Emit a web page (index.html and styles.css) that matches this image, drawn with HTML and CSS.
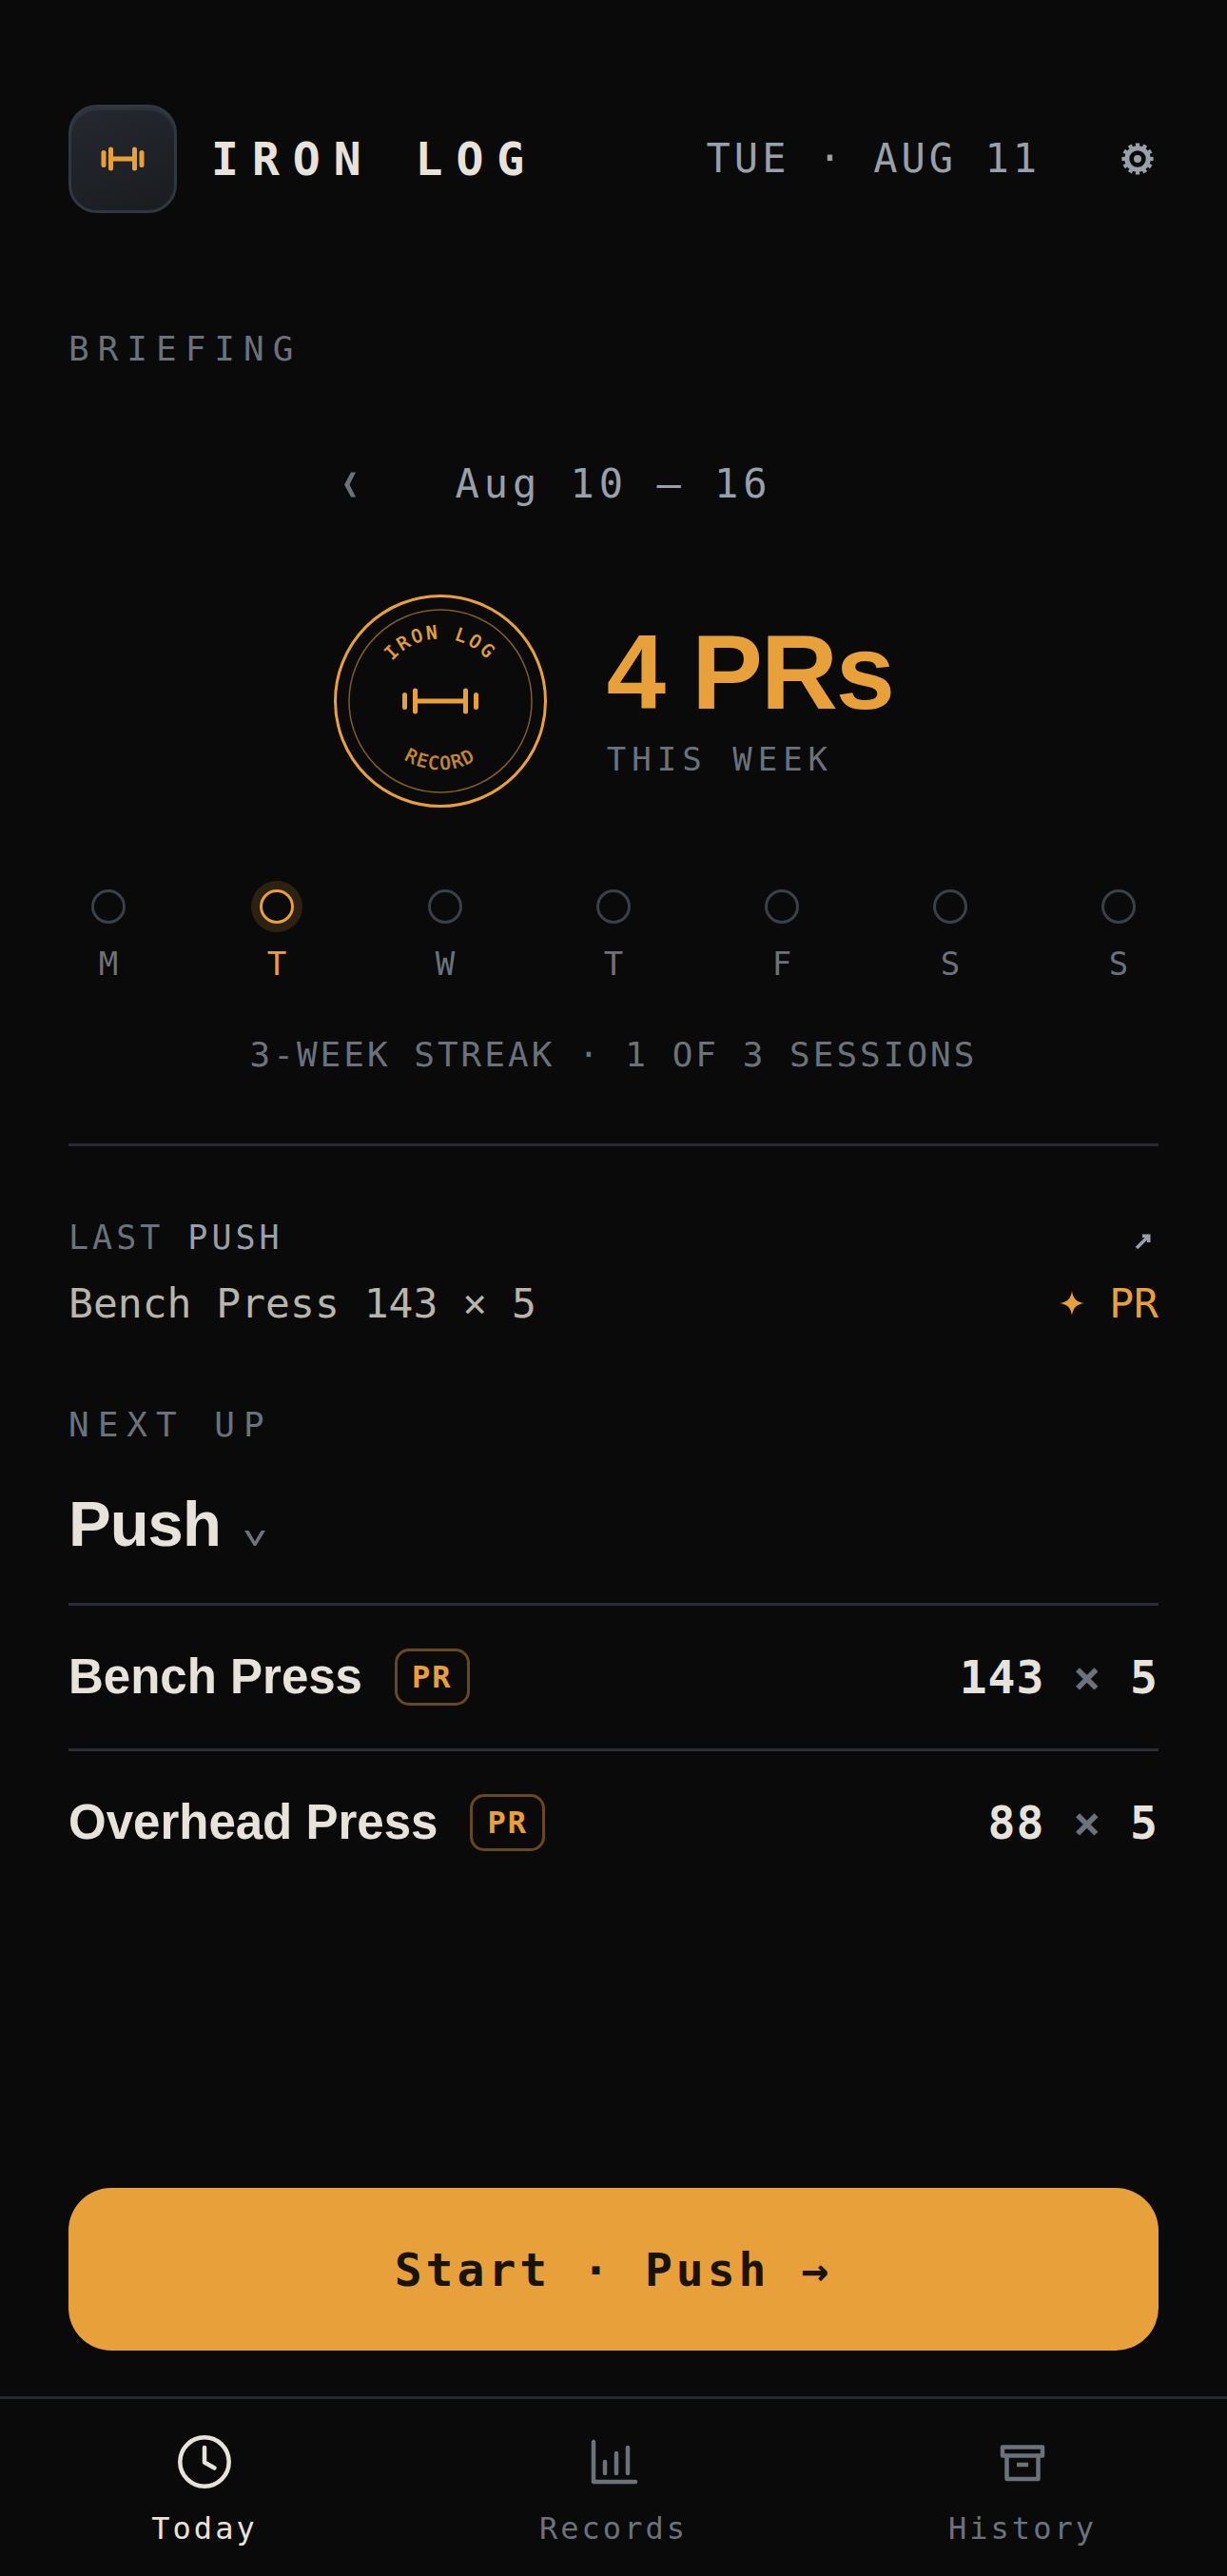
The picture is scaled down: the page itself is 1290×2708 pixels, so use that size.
FILE: index.html
```html
<!DOCTYPE html>
<html lang="en">
<head>
<meta charset="utf-8">
<meta name="viewport" content="width=device-width, initial-scale=1">
<title>Iron Log</title>
<link rel="stylesheet" href="styles.css">
</head>
<body>

<main class="screen">
  <header class="header">
    <div class="logo">
      <svg width="48" height="32" viewBox="0 0 48 32" fill="none" stroke="currentColor" stroke-width="5" stroke-linecap="round">
        <path d="M4 9.5v13M11.5 6v20M36.5 6v20M44 9.5v13"/>
        <path d="M11.5 16h25"/>
      </svg>
    </div>
    <h1 class="brand">IRON LOG</h1>
    <span class="date">TUE · AUG 11</span>
    <button class="icon-btn" type="button" aria-label="Settings">
      <svg width="36" height="36" viewBox="0 0 36 36" fill="none" stroke="currentColor">
        <circle cx="18" cy="18" r="11.2" stroke-width="5"/>
        <circle cx="18" cy="18" r="14.6" stroke-width="4" pathLength="24" stroke-dasharray="1.1 0.9" stroke-dashoffset="0.55"/>
        <circle cx="18" cy="18" r="4" fill="currentColor" stroke="none"/>
      </svg>
    </button>
  </header>

  <section class="briefing">
    <h2 class="label">BRIEFING</h2>

    <div class="week">
      <button class="week-btn" type="button" aria-label="Previous week">
        <svg width="14" height="28" viewBox="0 0 14 28" fill="currentColor">
          <path d="M8 1.500h5L6.500 14.500 13 27.500H8L1 14.500z"/>
        </svg>
      </button>
      <span class="week-range">Aug 10 – 16</span>
    </div>

    <div class="summary">
      <svg class="seal" width="224" height="224" viewBox="0 0 224 224" fill="none" stroke="currentColor">
        <defs>
          <path id="arc-top" d="M46 112a66 66 0 0 1 132 0"/>
          <path id="arc-bottom" d="M40 112a72 72 0 0 0 144 0"/>
        </defs>
        <circle cx="112" cy="112" r="110.5" stroke-width="3"/>
        <circle cx="112" cy="112" r="96" stroke-width="1.5" opacity="0.55"/>
        <text class="seal-top"><textPath href="#arc-top" startOffset="50%">IRON LOG</textPath></text>
        <text class="seal-bottom"><textPath href="#arc-bottom" startOffset="50%">RECORD</textPath></text>
        <path d="M74.500 105.500v13M85.500 101v22M138.500 101v22M149.500 105.500v13M85.500 112h53" stroke-width="5" stroke-linecap="round"/>
      </svg>
      <div class="summary-text">
        <strong class="count">4 PRs</strong>
        <span class="count-label">THIS WEEK</span>
      </div>
    </div>

    <ol class="days">
      <li class="day"><span class="dot"></span>M</li>
      <li class="day today"><span class="dot"></span>T</li>
      <li class="day"><span class="dot"></span>W</li>
      <li class="day"><span class="dot"></span>T</li>
      <li class="day"><span class="dot"></span>F</li>
      <li class="day"><span class="dot"></span>S</li>
      <li class="day"><span class="dot"></span>S</li>
    </ol>

    <p class="streak">3-WEEK STREAK · 1 OF 3 SESSIONS</p>
  </section>

  <section class="last">
    <div class="last-row last-head">
      <h2 class="last-title">LAST <span class="last-name">PUSH</span></h2>
      <button class="icon-btn" type="button" aria-label="Open last session">
        <svg width="18" height="18" viewBox="0 0 18 18" fill="none" stroke="currentColor" stroke-width="3.600">
          <path d="M2 16 14 4"/>
          <path d="M8 3.300h6.700V10"/>
        </svg>
      </button>
    </div>
    <div class="last-row last-set">
      <span>Bench Press 143 × 5</span>
      <span class="record">
        <svg width="26" height="26" viewBox="0 0 26 26" fill="currentColor">
          <path d="M13 0c1 7.500 4.500 12 13 13-8.500 1-12 5.500-13 13-1-7.500-4.500-12-13-13 8.500-1 12-5.500 13-13z"/>
        </svg>
        PR
      </span>
    </div>
  </section>

  <section class="next">
    <h2 class="label">NEXT UP</h2>
    <button class="picker" type="button">
      Push
      <svg width="24" height="18" viewBox="0 0 24 18" fill="currentColor">
        <path d="M1 1h4.500L12 12.200 18.500 1H23L13.200 17h-2.400z"/>
      </svg>
    </button>
    <ul class="lifts">
      <li class="lift">
        <span class="lift-name">Bench Press</span>
        <span class="badge">PR</span>
        <span class="weight">143 <span class="times">×</span> 5</span>
      </li>
      <li class="lift">
        <span class="lift-name">Overhead Press</span>
        <span class="badge">PR</span>
        <span class="weight">88 <span class="times">×</span> 5</span>
      </li>
    </ul>
  </section>

  <button class="start" type="button">Start · Push →</button>
</main>

<nav class="tabs">
  <a class="tab active" href="#today">
    <svg width="66" height="66" viewBox="0 0 66 66" fill="none" stroke="currentColor" stroke-width="4.500" stroke-linecap="round" stroke-linejoin="round">
      <circle cx="33" cy="33" r="25.700"/>
      <path d="M33 18v15.500l10.500 6"/>
    </svg>
    Today
  </a>
  <a class="tab" href="#records">
    <svg width="66" height="66" viewBox="0 0 66 66" fill="none" stroke="currentColor" stroke-width="4.500" stroke-linecap="round" stroke-linejoin="round">
      <path d="M12 12v42h44"/>
      <path d="M24 33v12M36 24v21M48 18v27"/>
    </svg>
    Records
  </a>
  <a class="tab" href="#history">
    <svg width="66" height="66" viewBox="0 0 66 66" fill="none" stroke="currentColor" stroke-width="4.500" stroke-linejoin="round">
      <path d="M12 17.500h42v9H12z"/>
      <path d="M16.500 26.500V51h33V26.500"/>
      <path d="M27 36h12"/>
    </svg>
    History
  </a>
</nav>

</body>
</html>
```
FILE: styles.css
```css
* {
  box-sizing: border-box;
}

body {
  margin: 0;
  min-height: 100vh;
  display: flex;
  flex-direction: column;
  background: #0a0a0a;
  color: #6b727b;
  font-family: "DejaVu Sans Mono", monospace;
  font-size: 36px;
  line-height: 48px;
}

h1, h2, p, ul, ol {
  margin: 0;
  padding: 0;
  font-size: inherit;
  font-weight: normal;
}

ul, ol {
  list-style: none;
}

button {
  padding: 0;
  border: 0;
  background: none;
  color: inherit;
  font: inherit;
  cursor: pointer;
}

svg {
  display: block;
  flex: none;
}

.screen {
  flex: 1;
  display: flex;
  flex-direction: column;
  padding: 110px 72px 48px;
}

/* header */
.header {
  display: flex;
  align-items: center;
  margin-bottom: 119px;
}

.logo {
  display: flex;
  align-items: center;
  justify-content: center;
  width: 114px;
  height: 114px;
  margin-right: 36px;
  border: 3px solid #303741;
  border-radius: 30px;
  background: linear-gradient(160deg, #252831, #1a1c1f);
  box-shadow: inset 0 3px 0 rgba(255, 255, 255, 0.06);
  color: #e8a13a;
}

.brand {
  color: #e8e3da;
  font-size: 48px;
  font-weight: bold;
  letter-spacing: 14px;
}

.date {
  margin-left: auto;
  margin-right: 80px;
  color: #9aa0a9;
  font-size: 42px;
  letter-spacing: 4px;
}

.icon-btn {
  display: flex;
  align-items: center;
  justify-content: center;
  width: 44px;
  height: 48px;
  color: #9aa0a9;
}

.label {
  letter-spacing: 9px;
}

/* briefing */
.briefing {
  padding-bottom: 69px;
  border-bottom: 3px solid #272b31;
}

.week {
  display: grid;
  grid-template-columns: 100px auto 100px;
  justify-content: center;
  column-gap: 60px;
  margin: 88px 0 86px;
  line-height: 60px;
}

.week-btn {
  display: flex;
  align-items: center;
  justify-content: center;
}

.week-range {
  color: #9aa0a9;
  font-size: 42px;
  letter-spacing: 5px;
}

.summary {
  display: flex;
  align-items: center;
  justify-content: center;
  gap: 63px;
  color: #e8a13a;
}

.seal text {
  fill: currentColor;
  stroke-width: 0.6;
  font-size: 19px;
  text-anchor: middle;
}

.seal-top {
  letter-spacing: 3px;
}

.seal-bottom {
  letter-spacing: 2px;
  opacity: 0.85;
}

.summary-text {
  display: flex;
  flex-direction: column;
  gap: 12px;
}

.count {
  font-family: "Liberation Sans", Arial, sans-serif;
  font-size: 112px;
  line-height: 110px;
  letter-spacing: -2px;
}

.count-label {
  color: #6b727b;
  font-size: 34px;
  letter-spacing: 6px;
}

.days {
  display: flex;
  justify-content: space-between;
  margin: 86px 0 52px;
}

.day {
  display: flex;
  flex-direction: column;
  align-items: center;
  gap: 22px;
  width: 84px;
  font-size: 34px;
  line-height: 40px;
}

.dot {
  width: 36px;
  height: 36px;
  border: 3px solid #3a4049;
  border-radius: 50%;
}

.today {
  color: #e8a13a;
}

.today .dot {
  border-color: #e8a13a;
  box-shadow: 0 0 0 9px rgba(232, 161, 58, 0.16);
}

.streak {
  text-align: center;
  letter-spacing: 3px;
}

/* last session */
.last {
  padding: 72px 0 74px;
}

.last-row {
  display: flex;
  align-items: center;
  justify-content: space-between;
}

.last-head {
  margin-bottom: 15px;
}

.last-title {
  font-size: 35px;
  letter-spacing: 4px;
}

.last-head .icon-btn {
  width: 32px;
  padding-top: 8px;
}

.last-name {
  color: #9aa0a9;
}

.last-set {
  color: #b8b5aa;
  font-size: 43px;
  line-height: 60px;
}

.record {
  display: flex;
  align-items: center;
  gap: 26px;
  color: #e8a13a;
}

/* next workout */
.picker {
  display: flex;
  align-items: flex-end;
  gap: 24px;
  margin: 40px 0 43px;
  color: #e8e3da;
  font-family: "Liberation Sans", Arial, sans-serif;
  font-size: 67px;
  font-weight: bold;
  line-height: 80px;
  letter-spacing: -1px;
}

.picker svg {
  margin-bottom: 16px;
  color: #6b727b;
}

.lift {
  display: flex;
  align-items: center;
  height: 153px;
  border-top: 3px solid #2a2d33;
  color: #e8e3da;
  font-weight: bold;
}

.lift-name {
  margin-right: 34px;
  font-family: "Liberation Sans", Arial, sans-serif;
  font-size: 51px;
}

.badge {
  padding: 0 15px;
  border: 3px solid #68481f;
  border-radius: 15px;
  color: #e8a13a;
  font-size: 32px;
  line-height: 54px;
  letter-spacing: 2px;
}

.weight {
  margin-left: auto;
  font-size: 48px;
  letter-spacing: 1px;
}

.times {
  color: #6b727b;
}

.start {
  height: 171px;
  margin-top: auto;
  border-radius: 45px;
  background: #e8a13a;
  color: #1a1408;
  font-size: 48px;
  font-weight: bold;
  letter-spacing: 4px;
}

/* bottom tabs */
.tabs {
  display: flex;
  padding: 33px 0 30px;
  border-top: 3px solid #272b31;
}

.tab {
  flex: 1;
  display: flex;
  flex-direction: column;
  align-items: center;
  gap: 17px;
  color: #6b727b;
  font-size: 32px;
  line-height: 40px;
  letter-spacing: 3px;
  text-decoration: none;
}

.tab.active {
  color: #e8e3da;
}
```
